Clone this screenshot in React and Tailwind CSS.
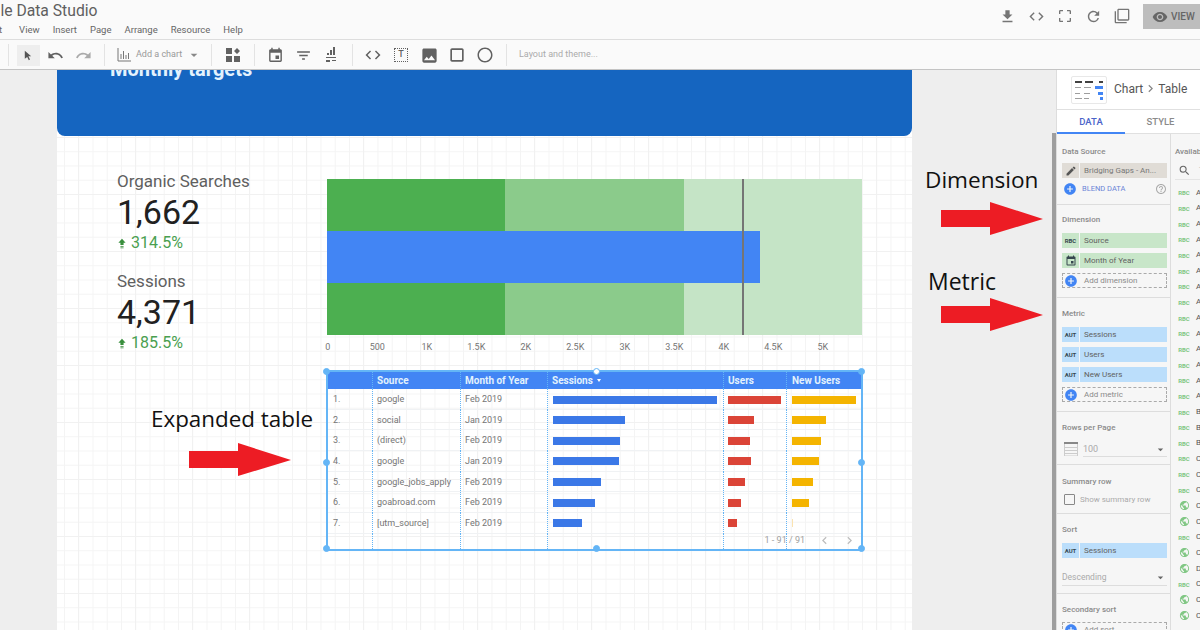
import React from 'react';
import {
  MdAddCircle, MdArrowDropDown, MdChevronLeft, MdChevronRight, MdCode, MdCropFree, MdEdit, MdEvent,
  MdFileDownload, MdFilterList, MdFilterNone, MdHelpOutline, MdImage, MdPublic, MdRedo, MdRefresh,
  MdSearch, MdUndo, MdVisibility, MdPanoramaFishEye, MdCropSquare,
} from 'react-icons/md';

const rows = [
  { n: '1.', source: 'google', month: 'Feb 2019', s: 164, u: 53, nu: 64 },
  { n: '2.', source: 'social', month: 'Jan 2019', s: 72, u: 26, nu: 34 },
  { n: '3.', source: '(direct)', month: 'Feb 2019', s: 67, u: 22, nu: 29 },
  { n: '4.', source: 'google', month: 'Jan 2019', s: 66, u: 23, nu: 27 },
  { n: '5.', source: 'google_jobs_apply', month: 'Feb 2019', s: 48, u: 17, nu: 21 },
  { n: '6.', source: 'goabroad.com', month: 'Feb 2019', s: 42, u: 13, nu: 17 },
  { n: '7.', source: '[utm_source]', month: 'Feb 2019', s: 29, u: 9, nu: 1 },
];

const axis = ['0', '500', '1K', '1.5K', '2K', '2.5K', '3K', '3.5K', '4K', '4.5K', '5K'];

const handles = [
  '-left-[5px] -top-[4px]',
  'left-[265px] -top-[4px] bg-white',
  '-right-[4px] -top-[4px]',
  '-left-[5px] top-[87px]',
  '-right-[4px] top-[87px]',
  '-left-[5px] -bottom-[3px]',
  'left-[265px] -bottom-[3px]',
  '-right-[4px] -bottom-[3px]',
];

const fields = [
  ...Array(14).fill(['abc', 'A']),
  ['abc', 'B'], ['abc', 'B'], ['abc', 'B'], ['abc', 'C'], ['abc', 'C'], ['abc', 'C'],
  ['geo', 'C'], ['geo', 'C'], ['abc', 'C'], ['geo', 'C'], ['geo', 'D'], ['abc', 'C'], ['geo', 'C'], ['geo', 'C'],
];

const colGrid = 'grid grid-cols-[44px_88px_87px_176px_63px_75px]';
const dotted = 'border-l border-dotted border-[#64b5f6]';

function Sep({ className }) {
  return <div className={`w-px h-[22px] bg-[#e3e3e3] ${className}`} />;
}

function Tool({ children, className = '' }) {
  return <div className={`w-7 h-full flex items-center justify-center text-[#616161] ${className}`}>{children}</div>;
}

function Label({ children, className = '' }) {
  return <div className={`h-3 leading-[14px] text-[8px] font-medium text-[#8a8a8a] ${className}`}>{children}</div>;
}

function Chip({ type, children, className = '' }) {
  const bg = type === 'metric' ? 'bg-[#bbdefb]' : 'bg-[#c8e6c9]';
  return (
    <div className={`flex h-[15px] w-[105px] gap-px ${className}`}>
      <div className={`w-[17px] flex items-center justify-center text-[6px] font-bold text-[#37474f] ${bg}`}>
        {type === 'date' ? <MdEvent size={12} /> : type === 'metric' ? 'AUT' : 'RBC'}
      </div>
      <div className={`flex-1 pl-[4px] text-[8px] leading-[15px] text-[#616161] ${bg}`}>{children}</div>
    </div>
  );
}

function AddRow({ children, className = '' }) {
  return (
    <div className={`flex items-center h-[15px] w-[105px] border border-dashed border-[#aaa] ${className}`}>
      <MdAddCircle size={14} className="text-[#4285f4] ml-[1px]" />
      <span className="ml-[6px] text-[8px] text-[#8a8a8a]">{children}</span>
    </div>
  );
}

function Scorecard({ label, value, delta, className = '' }) {
  return (
    <div className={className}>
      <div className="h-5 leading-[20px] text-[17px] text-[#5f5f5f]">{label}</div>
      <div className="h-10 mt-px leading-[40px] text-[34px] text-[#212121]">{value}</div>
      <div className="h-5 mt-px flex items-center text-[16px] text-[#4a9f50]">
        <svg width="8" height="11" viewBox="0 0 10 12" className="ml-[1px] mr-[5px] fill-[#388e3c]">
          <path d="M5 0 9.500 5H7v3H3V5H.5zM3 9h4v1H3zM3 11h4v1H3z" />
        </svg>
        {delta}
      </div>
    </div>
  );
}

function RedArrow({ className }) {
  return (
    <svg viewBox="0 0 102 33" className={`absolute w-[102px] h-[33px] fill-[#ed1c24] ${className}`}>
      <path d="M0 8H49V0L102 17 49 33V25H0z" />
    </svg>
  );
}

function ChartThumb() {
  return (
    <div className="w-[36px] h-[28px] border border-[#e8e8e8] rounded-[2px] flex items-center justify-center">
      <svg width="30" height="22" viewBox="0 0 30 22">
        <path d="M1 2h7v2H1zM11 2h8v2h-8zM25 2h4v2h-4z" fill="#424242" />
        <path d="M1 8h6v1H1zM10 8h7v1h-7zM1 14h5v1H1zM10 14h6v1h-6zM1 19h7v1H1zM10 19h5v1h-5z" fill="#9e9e9e" />
        <path d="M21 7h8v3h-8zM24 13h5v3h-5zM26 18h3v3h-3z" fill="#4285f4" />
      </svg>
    </div>
  );
}

export default function App() {
  return (
    <div className="relative w-[1200px] h-[630px] overflow-hidden flex flex-col bg-white font-['Roboto',sans-serif]">
      {/* top bar */}
      <div className="h-[40px] shrink-0 bg-[#fafafa] border-b border-[#ddd] flex justify-between overflow-hidden">
        <div>
          <div className="-ml-[37px] h-[21px] leading-[21px] text-[15.7px] text-[#5f5f5f] whitespace-nowrap">Google Data Studio</div>
          <div className="flex gap-[13px] -ml-[14px] mt-[3px] text-[9.5px] leading-[12px] text-[#666]">
            <span>Edit</span><span className="ml-[4px]">View</span><span>Insert</span><span>Page</span><span>Arrange</span><span>Resource</span><span>Help</span>
          </div>
        </div>
        <div className="flex items-start text-[#757575]">
          <div className="flex items-center h-[32px] gap-[12px] mr-[13px]">
            <MdFileDownload size={17} />
            <MdCode size={17} />
            <MdCropFree size={16} />
            <MdRefresh size={17} />
            <MdFilterNone size={16} />
          </div>
          <div className="mt-[4px] w-[57px] h-[25px] bg-[#bdbdbd] flex items-center pl-[9px] gap-[3px] text-[10px] font-medium text-[#666]">
            <MdVisibility size={16} className="shrink-0" />VIEW
          </div>
        </div>
      </div>

      {/* toolbar */}
      <div className="h-[30px] shrink-0 bg-[#fafafa] border-b border-[#c4c4c4] flex items-center pl-[8px] pt-px">
        <Sep />
        <Tool className="ml-[4px]">
          <div className="w-[23px] h-[21px] bg-[#eeeeee] flex items-center justify-center ml-[2px]">
            <svg width="8" height="11" viewBox="0 0 10 12" className="fill-[#555]"><path d="M1 0 9 7H5.500L7.500 11 6 12 4 8 1 10z" /></svg>
          </div>
        </Tool>
        <Tool><MdUndo size={17} /></Tool>
        <Tool className="text-[#aaa]"><MdRedo size={17} /></Tool>
        <Sep className="ml-[7px]" />
        <svg width="14" height="14" viewBox="0 0 14 14" className="ml-[12px] stroke-[#777] fill-none">
          <path d="M1 0v13h13M4 11V6M6.500 11V3M9 11V7M11.500 11V5" />
        </svg>
        <span className="ml-[5px] text-[9px] text-[#999] w-[48px] whitespace-nowrap">Add a chart</span>
        <MdArrowDropDown size={16} className="ml-[2px] text-[#888]" />
        <Sep className="ml-[9px]" />
        <Tool className="ml-[7px]">
          <svg width="14" height="14" viewBox="0 0 14 14" className="fill-[#616161]"><path d="M0 0h6v6H0zM0 8h6v6H0zM8 8h6v6H8zM11 0l3 3-3 3-3-3z" /></svg>
        </Tool>
        <Sep className="ml-[7px]" />
        <Tool className="ml-[6px]"><MdEvent size={17} /></Tool>
        <Tool><MdFilterList size={17} /></Tool>
        <Tool>
          <svg width="12" height="16" viewBox="0 0 12 16" className="fill-[#616161]"><path d="M8 0h2v8H8zM5 3h2v5H5zM2 6h2v2H2zM1 10h10v1H1zM1 13h4v2H1zM7 13h4v1H7z" /></svg>
        </Tool>
        <Sep className="ml-[7px]" />
        <Tool className="ml-[6px]"><MdCode size={18} /></Tool>
        <Tool>
          <div className="w-[14px] h-[14px] border border-dotted border-[#616161] flex items-center justify-center text-[9px] font-medium">T</div>
        </Tool>
        <Tool><MdImage size={19} /></Tool>
        <Tool><MdCropSquare size={20} /></Tool>
        <Tool><MdPanoramaFishEye size={18} /></Tool>
        <Sep className="ml-[7px]" />
        <span className="ml-[12px] text-[9px] text-[#aaa]">Layout and theme...</span>
      </div>

      {/* workspace */}
      <div className="flex flex-1 min-h-0">
        <div className="w-[1056px] shrink-0 bg-[#eeeeee] overflow-hidden pl-[57px]">
          <div className="w-[855px] h-[700px] bg-white bg-[linear-gradient(90deg,#f1f1f1_1px,transparent_1px),linear-gradient(#f1f1f1_1px,transparent_1px),linear-gradient(90deg,#f4f4f4_1px,transparent_1px),linear-gradient(#f4f4f4_1px,transparent_1px)] bg-[size:57px_57px,57px_57px,14.25px_14.25px,14.25px_14.25px] bg-[position:21px_0,0_10px,7px_0,0_10px]">
            <div className="h-[66px] bg-[#1565c0] rounded-b-[8px] overflow-hidden pl-[53px]">
              <div className="-mt-[13px] h-[24px] leading-[24px] text-[20px] font-bold text-[#e3f2fd]">Monthly targets</div>
            </div>

            <div className="flex pl-[60px] pt-[35px]">
              <div className="w-[210px] shrink-0">
                <Scorecard label="Organic Searches" value="1,662" delta="314.5%" />
                <Scorecard label="Sessions" value="4,371" delta="185.5%" className="mt-[18px]" />
              </div>
              <div className="mt-[8px] w-[535px]">
                <div className="relative h-[156px] flex">
                  <div className="w-[178px] bg-[#4caf50]" />
                  <div className="w-[179px] bg-[#8bcb8b]" />
                  <div className="w-[178px] bg-[#c5e4c6]" />
                  <div className="absolute left-0 top-[52px] w-[433px] h-[52px] bg-[#4285f4]" />
                  <div className="absolute left-[415px] top-0 w-[2px] h-full bg-[#757575]" />
                </div>
                <div className="flex mt-[6px] -ml-[24px] h-3 leading-3 text-[9px] text-[#757575]">
                  {axis.map((t) => (
                    <span key={t} className="w-[49.5px] shrink-0 text-center">{t}</span>
                  ))}
                </div>
              </div>
            </div>

            <div className="relative mt-[17px] ml-[269px] w-[537px] h-[181px] border-2 border-[#64b5f6] flex flex-col">
              <div className={`${colGrid} h-[17px] bg-[#4285f4] text-[10px] leading-[17px] font-bold text-[#e3f2fd]`}>
                <div />
                <div className={`${dotted} pl-[4px]`}>Source</div>
                <div className={`${dotted} pl-[4px]`}>Month of Year</div>
                <div className={`${dotted} pl-[4px] flex items-center gap-[4px]`}>
                  Sessions
                  <span className="w-0 h-0 border-x-[2.5px] border-x-transparent border-t-[3px] border-t-white" />
                </div>
                <div className={`${dotted} pl-[4px]`}>Users</div>
                <div className={`${dotted} pl-[5px]`}>New Users</div>
              </div>
              {rows.map((r) => (
                <div key={r.n} className={`${colGrid} h-[20.67px] text-[9px] text-[#757575] border-b border-[#f0f2f4]`}>
                  <div className="pl-[5px] leading-[21px]">{r.n}</div>
                  <div className={`${dotted} pl-[4px] leading-[21px]`}>{r.source}</div>
                  <div className={`${dotted} pl-[4px] leading-[21px]`}>{r.month}</div>
                  <div className={`${dotted} pl-[5px] flex items-center`}>
                    <div className="h-[8px] bg-[#3b78e7]" style={{ width: r.s }} />
                  </div>
                  <div className={`${dotted} pl-[4px] flex items-center`}>
                    <div className="h-[8px] bg-[#db4437]" style={{ width: r.u }} />
                  </div>
                  <div className={`${dotted} pl-[5px] flex items-center`}>
                    <div className={`h-[8px] ${r.nu > 1 ? 'bg-[#f4b400]' : 'bg-[#fbe3b0]'}`} style={{ width: r.nu }} />
                  </div>
                </div>
              ))}
              <div className={`${colGrid} flex-1`}>
                <div />
                <div className={dotted} />
                <div className={dotted} />
                <div className={dotted} />
                <div className={dotted} />
                <div className={dotted} />
              </div>
              <div className="absolute right-[4px] bottom-[1px] flex items-center text-[9px] text-[#9e9e9e]">
                <span className="mr-[12px]">1 - 91 / 91</span>
                <MdChevronLeft size={15} className="text-[#bdbdbd]" />
                <MdChevronRight size={15} className="ml-[10px] text-[#bdbdbd]" />
              </div>
              {handles.map((h) => (
                <span key={h} className={`absolute w-[7px] h-[7px] rounded-full bg-[#64b5f6] border border-[#64b5f6] ${h}`} />
              ))}
            </div>
          </div>
        </div>

        {/* properties panel */}
        <div className="flex-1 min-w-0 flex flex-col border-l border-[#ddd] bg-white">
          <div className="h-[40px] shrink-0 flex items-center pl-[14px] border-b border-[#e0e0e0]">
            <ChartThumb />
            <span className="ml-[7px] text-[12px] text-[#555] -mt-[2px]">Chart</span>
            <MdChevronRight size={15} className="text-[#888] -mt-[2px]" />
            <span className="text-[12px] text-[#555] -mt-[2px]">Table</span>
          </div>
          <div className="h-[24px] shrink-0 flex text-[9.5px] leading-[24px] font-medium">
            <div className="w-[68px] text-center text-[#4a63c9] border-b-2 border-[#4285f4]">DATA</div>
            <div className="flex-1 pl-[2px] text-center text-[#8a8a8a] border-b border-[#e0e0e0] pr-[6px]">STYLE</div>
          </div>
          <div className="flex flex-1 min-h-0 bg-[#f6f6f6]">
            <div className="w-[114px] shrink-0 border-r border-[#ddd] overflow-hidden">
              <div className="h-[71px] pl-[5px] pt-[11px] border-b border-[#ddd]">
                <Label>Data Source</Label>
                <div className="flex h-[15px] w-[105px] gap-px mt-[6px]">
                  <div className="w-[17px] bg-[#e0dcd6] flex items-center justify-center text-[#555]"><MdEdit size={12} /></div>
                  <div className="flex-1 bg-[#e0dcd6] pl-[4px] text-[8px] leading-[15px] text-[#777] whitespace-nowrap overflow-hidden">Bridging Gaps - An...</div>
                </div>
                <div className="flex items-center h-4 mt-[3px] text-[7.5px] text-[#6b84d6]">
                  <MdAddCircle size={14} className="text-[#4285f4] ml-[1px]" />
                  <span className="ml-[5px]">BLEND DATA</span>
                  <MdHelpOutline size={12} className="ml-auto mr-[3px] text-[#aaa]" />
                </div>
              </div>
              <div className="h-[93px] pl-[5px] pt-[8px] border-b border-[#ddd]">
                <Label>Dimension</Label>
                <Chip type="text" className="mt-[8px]">Source</Chip>
                <Chip type="date" className="mt-[5px]">Month of Year</Chip>
                <AddRow className="mt-[5px]">Add dimension</AddRow>
              </div>
              <div className="h-[114px] pl-[5px] pt-[9px] border-b border-[#ddd]">
                <Label>Metric</Label>
                <Chip type="metric" className="mt-[8px]">Sessions</Chip>
                <Chip type="metric" className="mt-[5px]">Users</Chip>
                <Chip type="metric" className="mt-[5px]">New Users</Chip>
                <AddRow className="mt-[5px]">Add metric</AddRow>
              </div>
              <div className="h-[53px] pl-[5px] pt-[9px] border-b border-[#ddd]">
                <Label>Rows per Page</Label>
                <div className="flex items-center h-[16px] mt-[8px]">
                  <svg width="14" height="14" viewBox="0 0 14 14" className="shrink-0 ml-[2px]">
                    <path d="M0 0h14v2H0z" fill="#888" />
                    <path d="M.5 2v12h13V2M0 5.500h14M0 8.500h14M0 11.500h14" stroke="#ccc" fill="none" />
                  </svg>
                  <div className="flex-1 ml-[5px] mr-[3px] pt-[2px] flex items-center justify-between text-[9px] text-[#aaa] border-b border-[#ddd] h-full">
                    100<MdArrowDropDown size={13} className="text-[#666]" />
                  </div>
                </div>
              </div>
              <div className="h-[49px] pl-[5px] pt-[10px] border-b border-[#ddd]">
                <Label>Summary row</Label>
                <div className="flex items-center h-[14px] mt-[5px]">
                  <div className="ml-[2px] w-[11px] h-[11px] border-[1.5px] border-[#888] rounded-[1px]" />
                  <span className="ml-[5px] text-[8px] text-[#aaa] pt-[2px]">Show summary row</span>
                </div>
              </div>
              <div className="h-[80px] pl-[5px] pt-[9px] border-b border-[#ddd]">
                <Label>Sort</Label>
                <Chip type="metric" className="mt-[8px]">Sessions</Chip>
                <div className="flex items-center justify-between w-[105px] h-[17px] mt-[11px] text-[8.5px] text-[#aaa] border-b border-[#ddd]">
                  Descending<MdArrowDropDown size={13} className="text-[#666]" />
                </div>
              </div>
              <div className="pl-[5px] pt-[9px]">
                <Label>Secondary sort</Label>
                <AddRow className="mt-[7px]">Add sort</AddRow>
              </div>
            </div>

            <div className="flex-1 min-w-0 overflow-hidden pl-[4px]">
              <div className="h-3 mt-[11px] leading-[14px] text-[8px] font-medium text-[#8a8a8a] whitespace-nowrap">Available Fields</div>
              <div className="h-[19px] mt-[4px] flex items-center border-b border-[#e5e5e5] text-[#666]">
                <MdSearch size={13} className="ml-[3px] shrink-0" />
                <span className="ml-[8px] text-[8px] text-[#aaa] whitespace-nowrap">Type</span>
              </div>
              <div className="mt-[5px]">
                {fields.map(([kind, letter], i) => (
                  <div key={i} className="h-[15.67px] flex items-center whitespace-nowrap">
                    <div className="w-[18px] shrink-0 flex justify-center text-[6px] font-bold text-[#81c784]">
                      {kind === 'geo' ? <MdPublic size={11} /> : 'RBC'}
                    </div>
                    <span className="ml-[3px] text-[8px] text-[#555]">{letter}</span>
                  </div>
                ))}
              </div>
            </div>
          </div>
        </div>
      </div>

      {/* annotations drawn over the screenshot */}
      <div className="absolute left-[1052px] top-[133px] w-[4px] h-[497px] bg-[#9e9e9e]" />
      <div className="absolute left-[925px] top-[165px] text-[22.6px] leading-[30px] text-[#111] font-['Open_Sans',sans-serif]">Dimension</div>
      <div className="absolute left-[928px] top-[266px] text-[23px] leading-[30px] text-[#111] font-['Open_Sans',sans-serif]">Metric</div>
      <div className="absolute left-[151px] top-[404px] text-[22.4px] leading-[30px] text-[#111] font-['Open_Sans',sans-serif]">Expanded table</div>
      <RedArrow className="left-[941px] top-[202px]" />
      <RedArrow className="left-[941px] top-[298px]" />
      <RedArrow className="left-[189px] top-[443px]" />
    </div>
  );
}
